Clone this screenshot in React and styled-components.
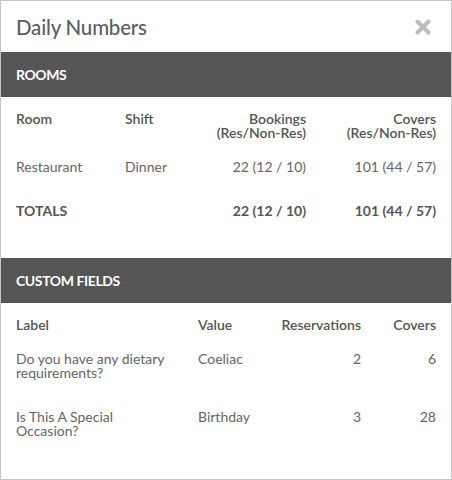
import React from "react";
import styled, { createGlobalStyle } from "styled-components";

const Global = createGlobalStyle`
  html, body { margin: 0; padding: 0; background: #fff; }
  body { font-family: Lato, "Noto Sans", sans-serif; }
`;

const Panel = styled.div`
  box-sizing: border-box;
  width: 452px;
  height: 480px;
  border: 1px solid #c4c4c4;
  background: #fff;
  display: flex;
  flex-direction: column;
  overflow: hidden;
`;

const TitleBar = styled.div`
  height: 51px;
  display: flex;
  align-items: center;
  justify-content: space-between;
  padding: 0 20px 0 15px;
  flex-shrink: 0;
`;

const Title = styled.h1`
  margin: 0;
  font-size: 20.5px;
  font-weight: 500;
  color: #5a5e63;
  letter-spacing: -0.2px;
`;

const Close = styled.button`
  border: 0;
  background: none;
  padding: 0;
  width: 16px;
  height: 16px;
  display: flex;
  cursor: pointer;
`;

const SectionBar = styled.div`
  height: 45px;
  background: #555555;
  color: #fff;
  font-weight: 700;
  font-size: 14px;
  letter-spacing: -0.4px;
  display: flex;
  align-items: center;
  padding: 0 15px;
  flex-shrink: 0;
`;

const Table = styled.div`
  display: grid;
  grid-template-columns: ${(p) => p.$cols};
  padding: 0 15px 25px;
  font-size: 14px;
  line-height: 14px;
  color: #666;
`;

const Cell = styled.div`
  padding: ${(p) => (p.$head ? "15px 0 5px" : "15px 0")};
  padding-right: ${(p) => (p.$wrap ? "20px" : "0")};
  text-align: ${(p) => (p.$right ? "right" : "left")};
  font-weight: ${(p) => (p.$bold ? 700 : p.$head ? 600 : 400)};
  color: ${(p) => (p.$head || p.$bold ? "#555" : "#666")};
`;

const rooms = [
  { room: "Restaurant", shift: "Dinner", bookings: "22 (12 / 10)", covers: "101 (44 / 57)" },
];

const fields = [
  { label: "Do you have any dietary requirements?", value: "Coeliac", res: 2, covers: 6 },
  { label: "Is This A Special Occasion?", value: "Birthday", res: 3, covers: 28 },
];

export default function App() {
  return (
    <>
      <Global />
      <Panel>
        <TitleBar>
          <Title>Daily Numbers</Title>
          <Close aria-label="Close">
            <svg width="16" height="16" viewBox="0 0 16 16">
              <path d="M2.5 2.5 L13.5 13.5 M13.5 2.5 L2.5 13.5" stroke="#bdbdbd" strokeWidth="4" strokeLinecap="round" />
            </svg>
          </Close>
        </TitleBar>
        <SectionBar>ROOMS</SectionBar>
        <Table $cols="109px 71px 110px 130px">
          <Cell $head>Room</Cell>
          <Cell $head>Shift</Cell>
          <Cell $head $right>Bookings<br />(Res/Non-Res)</Cell>
          <Cell $head $right>Covers<br />(Res/Non-Res)</Cell>
          {rooms.map((r) => (
            <React.Fragment key={r.room}>
              <Cell>{r.room}</Cell>
              <Cell>{r.shift}</Cell>
              <Cell $right>{r.bookings}</Cell>
              <Cell $right>{r.covers}</Cell>
            </React.Fragment>
          ))}
          <Cell $bold>TOTALS</Cell>
          <Cell />
          <Cell $bold $right>22 (12 / 10)</Cell>
          <Cell $bold $right>101 (44 / 57)</Cell>
        </Table>
        <SectionBar>CUSTOM FIELDS</SectionBar>
        <Table $cols="182px 63px 100px 75px">
          <Cell $head>Label</Cell>
          <Cell $head>Value</Cell>
          <Cell $head $right>Reservations</Cell>
          <Cell $head $right>Covers</Cell>
          {fields.map((f) => (
            <React.Fragment key={f.label}>
              <Cell $wrap>{f.label}</Cell>
              <Cell>{f.value}</Cell>
              <Cell $right>{f.res}</Cell>
              <Cell $right>{f.covers}</Cell>
            </React.Fragment>
          ))}
        </Table>
      </Panel>
    </>
  );
}
